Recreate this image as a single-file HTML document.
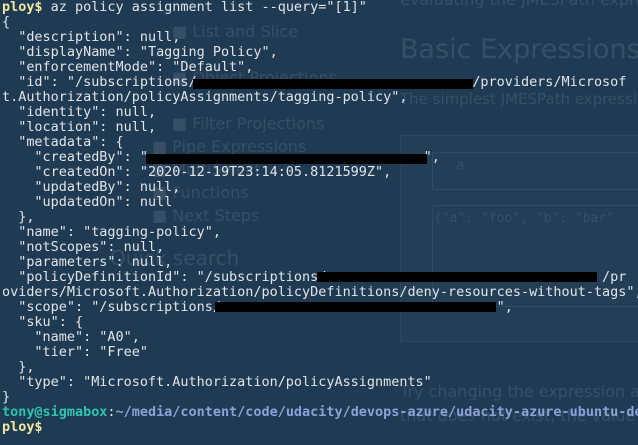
<html><head><style>
body{margin:0;width:638px;height:445px;overflow:hidden;background:#1f3b53;position:relative;font-family:"DejaVu Sans Mono","Liberation Mono",monospace}
.g{position:absolute;color:#364f66;font-family:"DejaVu Sans","Liberation Sans",sans-serif;white-space:nowrap}
pre{position:absolute;left:2px;top:0;margin:0;font-family:"DejaVu Sans Mono",monospace;font-size:13.48px;line-height:15px;color:#e2e4e6}
.b{color:#f0e8a0;font-weight:bold}.t{color:#2ec4b0;font-weight:bold}.p{color:#8ea0d8;font-weight:bold}
.r{position:absolute;background:#000}
</style></head><body>
<div class="g" style="left:400px;top:-10px;font-size:16px">evaluating the JMESPath express</div>
<div class="g" style="left:400px;top:34px;font-size:27px">Basic Expressions</div>
<div class="g" style="left:400px;top:90px;font-size:15px">The simplest JMESPath expressi</div>
<div style="position:absolute;left:400px;top:135px;width:240px;height:205px;background:#233f57;border:1px solid #2c475e"></div>
<div style="position:absolute;left:432px;top:152px;width:210px;height:36px;border:1px solid #304b62"></div>
<div class="g" style="left:456px;top:158px;font-size:14px">a</div>
<div style="position:absolute;left:432px;top:205px;width:210px;height:100px;border:1px solid #304b62"></div>
<div class="g" style="left:434px;top:211px;font-family:'DejaVu Sans Mono';font-size:13px">{"a": "foo", "b": "bar"</div>
<div class="g" style="left:172px;top:22px;font-size:16px">■ List and Slice</div>
<div class="g" style="left:172px;top:68px;font-size:16px">■ Object Projections</div>
<div class="g" style="left:172px;top:114px;font-size:16px">■ Filter Projections</div>
<div class="g" style="left:152px;top:137px;font-size:16px">■ Pipe Expressions</div>
<div class="g" style="left:152px;top:160px;font-size:16px">■ MultiSelect</div>
<div class="g" style="left:152px;top:183px;font-size:16px">■ Functions</div>
<div class="g" style="left:152px;top:206px;font-size:16px">■ Next Steps</div>
<div class="g" style="left:110px;top:246px;font-size:20px">Quick search</div>
<div class="g" style="left:400px;top:382px;font-size:16px">Try changing the expression abo</div>
<div class="g" style="left:400px;top:406px;font-size:16px">that does not exist, the value of</div>
<pre><span class="b">ploy$</span> az policy assignment list --query="[1]"
{
  "description": null,
  "displayName": "Tagging Policy",
  "enforcementMode": "Default",
  "id": "/subscriptions/                                  /providers/Microsof
t.Authorization/policyAssignments/tagging-policy",
  "identity": null,
  "location": null,
  "metadata": {
    "createdBy": "                                  ",
    "createdOn": "2020-12-19T23:14:05.8121599Z",
    "updatedBy": null,
    "updatedOn": null
  },
  "name": "tagging-policy",
  "notScopes": null,
  "parameters": null,
  "policyDefinitionId": "/subscriptions/                                  /pr
oviders/Microsoft.Authorization/policyDefinitions/deny-resources-without-tags",
  "scope": "/subscriptions/                                  ",
  "sku": {
    "name": "A0",
    "tier": "Free"
  },
  "type": "Microsoft.Authorization/policyAssignments"
}
<span class="t">tony@sigmabox</span>:<span class="p">~/media/content/code/udacity/devops-azure/udacity-azure-ubuntu-de</span>
<span class="b">ploy$</span></pre>
<div class="r" style="left:193px;top:79px;width:280px;height:10px"></div>
<div class="r" style="left:146px;top:154px;width:281px;height:10px"></div>
<div class="r" style="left:317px;top:272px;width:280px;height:10px"></div>
<div class="r" style="left:215px;top:302px;width:281px;height:10px"></div>
</body></html>
